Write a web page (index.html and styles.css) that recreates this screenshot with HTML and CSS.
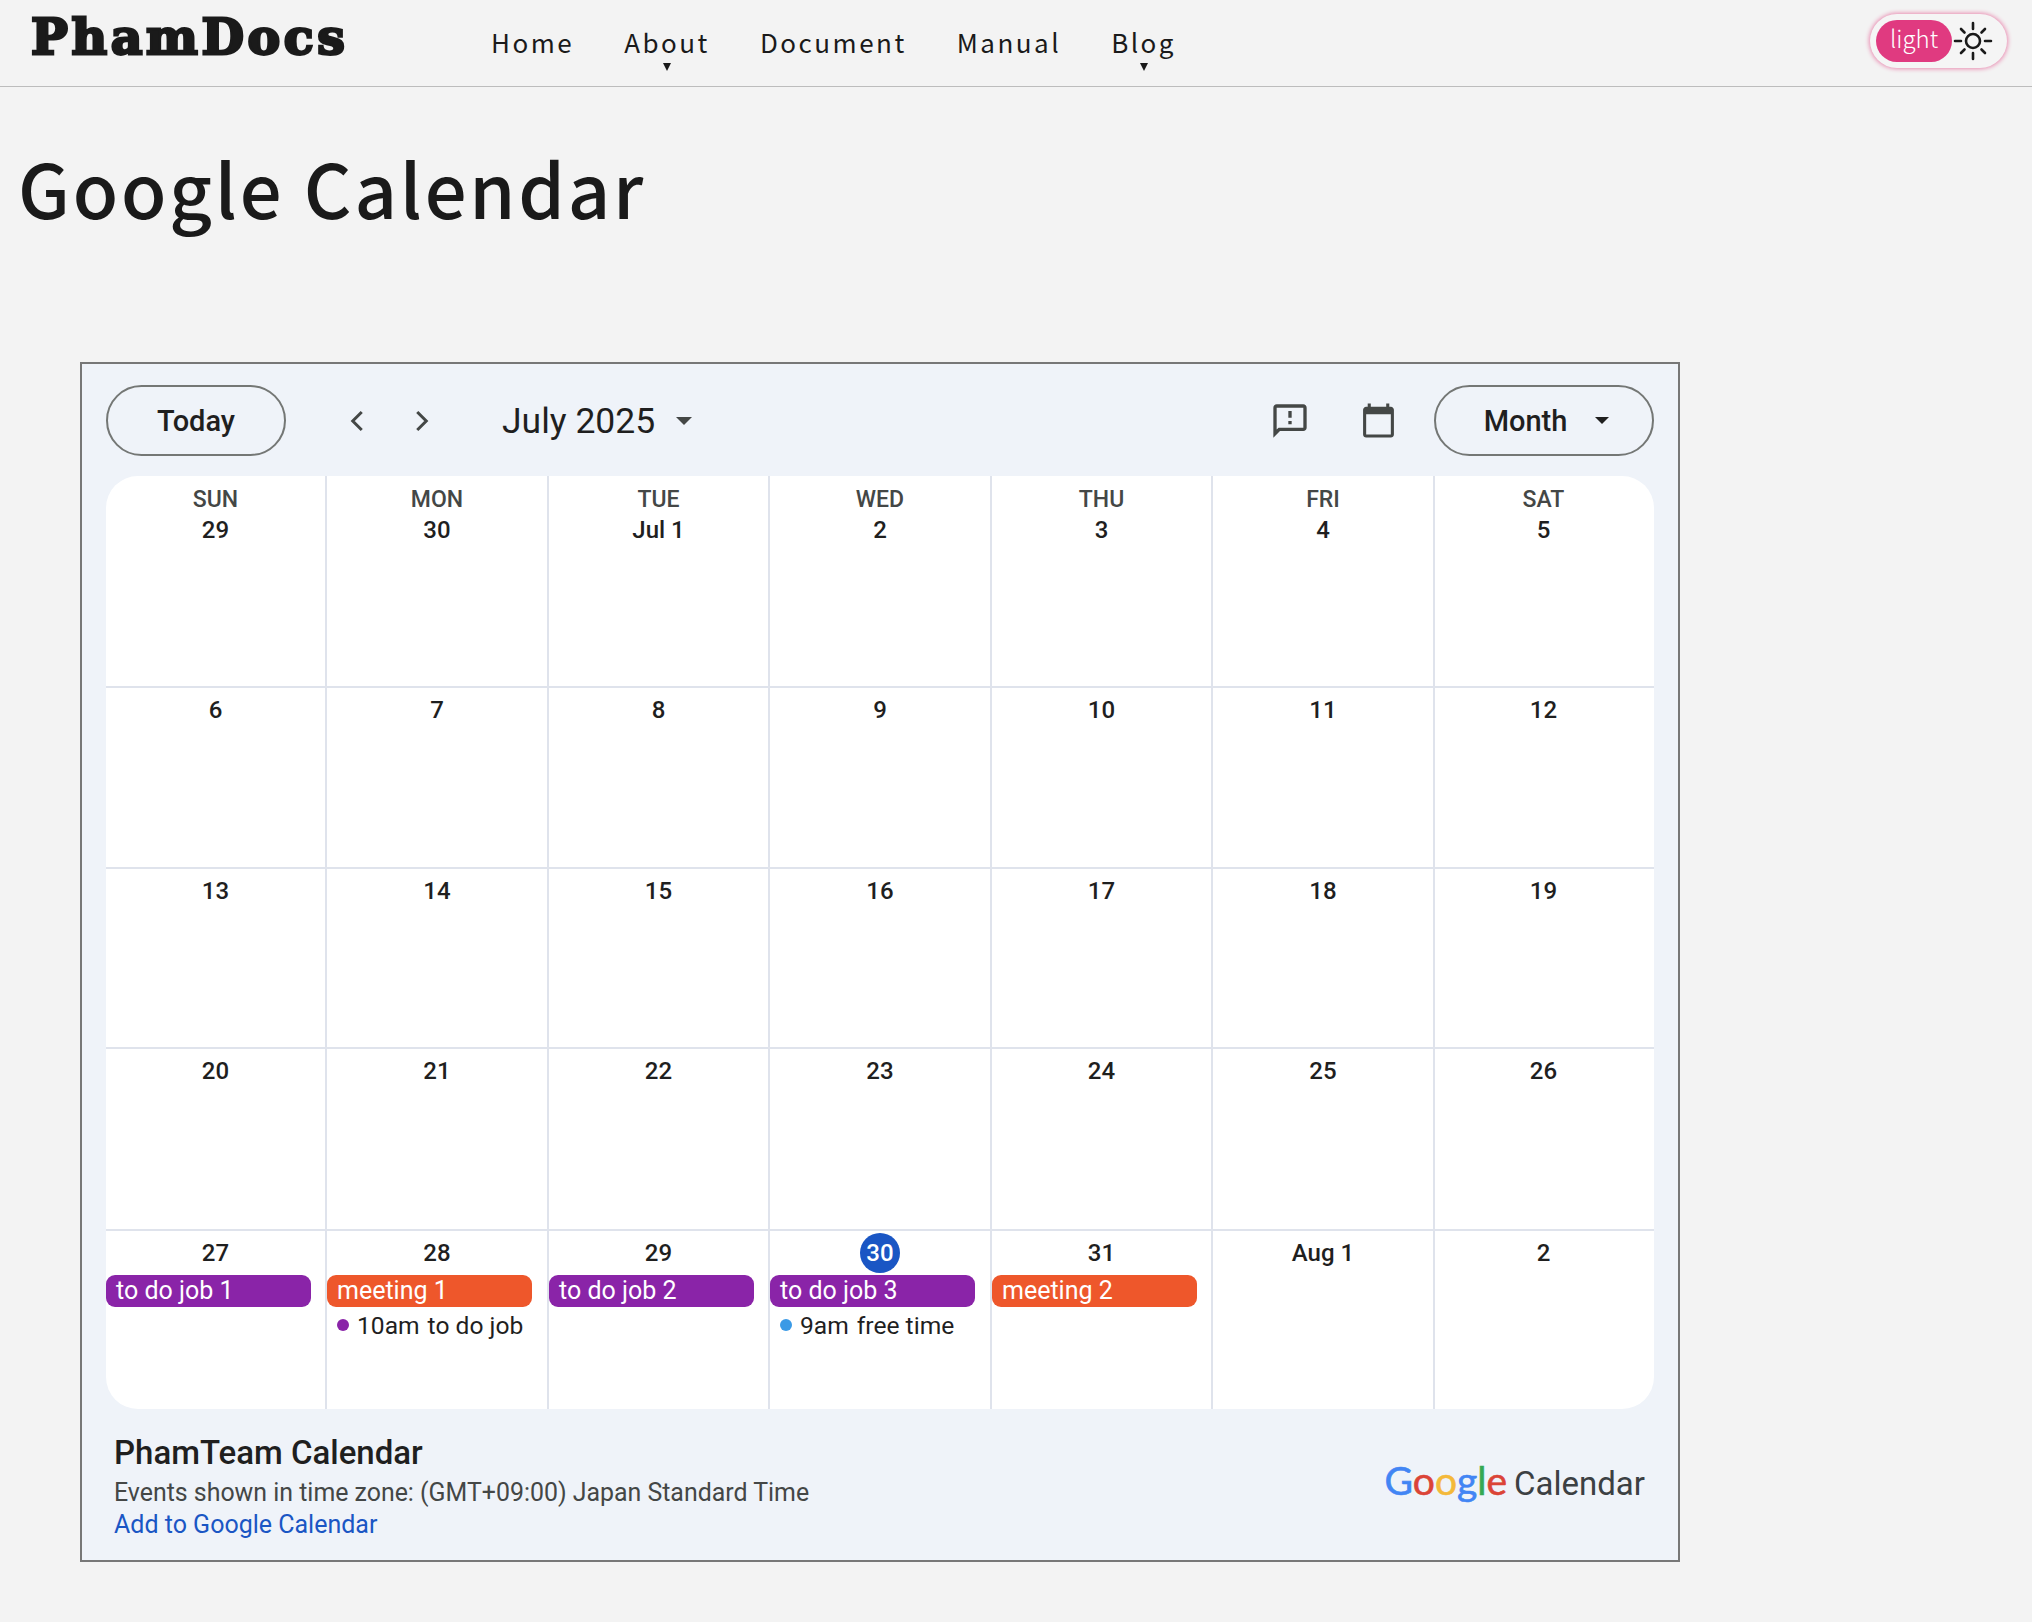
FILE: index.html
```html
<!DOCTYPE html>
<html lang="en">
<head>
<meta charset="utf-8">
<title>Google Calendar</title>
<link rel="stylesheet" href="styles.css">
</head>
<body>
<header class="topbar">
  <a class="brand">PhamDocs</a>
  <nav class="nav">
    <a class="nav-item">Home</a>
    <a class="nav-item has-menu">About</a>
    <a class="nav-item">Document</a>
    <a class="nav-item">Manual</a>
    <a class="nav-item has-menu">Blog</a>
  </nav>
  <div class="theme-toggle">
    <span class="theme-label">light</span>
    <svg class="sun" viewBox="0 0 40 40" fill="none" stroke="#1a1a1a" stroke-width="2.6" stroke-linecap="round">
      <circle cx="20" cy="20" r="7"/>
      <path d="M20 2v6M20 32v6M2 20h6M32 20h6M8 8l3.500 3.500M28.500 28.500 32 32M32 8l-3.500 3.500M11.500 28.500 8 32"/>
    </svg>
  </div>
</header>
<main class="content">
  <h1 class="page-title">Google Calendar</h1>
  <section class="cal-frame">
    <div class="toolbar">
      <button class="pill today">Today</button>
      <span class="icon-btn prev"><svg viewBox="0 0 24 24" width="36" height="36" fill="none" stroke="#444746" stroke-width="2"><path d="M14.500 6 8.500 12l6 6"/></svg></span>
      <span class="icon-btn next"><svg viewBox="0 0 24 24" width="36" height="36" fill="none" stroke="#444746" stroke-width="2"><path d="M9.500 6l6 6-6 6"/></svg></span>
      <span class="month-title">July 2025</span>
      <span class="caret title-caret"></span>
      <span class="spacer"></span>
      <span class="icon-btn"><svg viewBox="0 0 24 24" width="40" height="40" fill="#444746"><path d="M20 2H4c-1.100 0-1.990.9-1.990 2L2 22l4-4h14c1.100 0 2-.9 2-2V4c0-1.100-.9-2-2-2zm0 14H5.170L4 17.170V4h16v12zM11 12h2v2h-2zm0-6h2v4h-2z"/></svg></span>
      <span class="icon-btn cal-icon"><svg viewBox="0 0 24 24" width="37" height="37" fill="#444746"><path d="M20 3h-1V1h-2v2H7V1H5v2H4c-1.100 0-2 .9-2 2v16c0 1.100.9 2 2 2h16c1.100 0 2-.9 2-2V5c0-1.100-.9-2-2-2zm0 18H4V8h16v13z"/></svg></span>
      <button class="pill month-btn">Month<span class="caret month-caret"></span></button>
    </div>
    <div class="grid">
      <div class="cell head"><div class="dow">SUN</div><div class="num">29</div></div>
      <div class="cell head"><div class="dow">MON</div><div class="num">30</div></div>
      <div class="cell head"><div class="dow">TUE</div><div class="num">Jul 1</div></div>
      <div class="cell head"><div class="dow">WED</div><div class="num">2</div></div>
      <div class="cell head"><div class="dow">THU</div><div class="num">3</div></div>
      <div class="cell head"><div class="dow">FRI</div><div class="num">4</div></div>
      <div class="cell head"><div class="dow">SAT</div><div class="num">5</div></div>

      <div class="cell"><div class="num">6</div></div>
      <div class="cell"><div class="num">7</div></div>
      <div class="cell"><div class="num">8</div></div>
      <div class="cell"><div class="num">9</div></div>
      <div class="cell"><div class="num">10</div></div>
      <div class="cell"><div class="num">11</div></div>
      <div class="cell"><div class="num">12</div></div>

      <div class="cell"><div class="num">13</div></div>
      <div class="cell"><div class="num">14</div></div>
      <div class="cell"><div class="num">15</div></div>
      <div class="cell"><div class="num">16</div></div>
      <div class="cell"><div class="num">17</div></div>
      <div class="cell"><div class="num">18</div></div>
      <div class="cell"><div class="num">19</div></div>

      <div class="cell"><div class="num">20</div></div>
      <div class="cell"><div class="num">21</div></div>
      <div class="cell"><div class="num">22</div></div>
      <div class="cell"><div class="num">23</div></div>
      <div class="cell"><div class="num">24</div></div>
      <div class="cell"><div class="num">25</div></div>
      <div class="cell"><div class="num">26</div></div>

      <div class="cell"><div class="num">27</div><div class="event purple">to do job 1</div></div>
      <div class="cell"><div class="num">28</div><div class="event orange">meeting 1</div><div class="timed"><i class="dot dot-purple"></i><span>10am</span><span>to do job</span></div></div>
      <div class="cell"><div class="num">29</div><div class="event purple">to do job 2</div></div>
      <div class="cell"><div class="num"><span class="today-mark">30</span></div><div class="event purple">to do job 3</div><div class="timed"><i class="dot dot-blue"></i><span>9am</span><span>free time</span></div></div>
      <div class="cell"><div class="num">31</div><div class="event orange">meeting 2</div></div>
      <div class="cell"><div class="num">Aug 1</div></div>
      <div class="cell"><div class="num">2</div></div>
    </div>
    <footer class="cal-footer">
      <div class="cal-info">
        <div class="cal-name">PhamTeam Calendar</div>
        <div class="cal-tz">Events shown in time zone: (GMT+09:00) Japan Standard Time</div>
        <a class="cal-add">Add to Google Calendar</a>
      </div>
      <div class="g-logo"><span class="g-word"><span class="g-blue">G</span><span class="g-red">o</span><span class="g-yellow">o</span><span class="g-blue">g</span><span class="g-green">l</span><span class="g-red">e</span></span><span class="g-cal">Calendar</span></div>
    </footer>
  </section>
</main>
</body>
</html>
```

FILE: styles.css
```css
* { box-sizing: border-box; }
html, body { margin: 0; padding: 0; }
body {
  width: 2032px;
  min-height: 1622px;
  background: #f3f3f3;
  color: #1a1a1a;
  font-family: "Noto Sans CJK JP", "Noto Sans", sans-serif;
}

/* top bar */
.topbar {
  height: 87px;
  display: flex;
  align-items: flex-start;
  border-bottom: 1px solid #bcbcbc;
}
.brand {
  width: 491px;
  padding-left: 31px;
  font-family: "DejaVu Serif", serif;
  font-weight: 700;
  font-size: 49px;
  line-height: 74px;
  letter-spacing: 3.6px;
  -webkit-text-stroke: 2.8px #1a1a1a;
  white-space: nowrap;
}
.nav {
  display: flex;
  gap: 50px;
  padding-top: 23px;
  font-size: 26px;
  line-height: 38px;
  letter-spacing: 2.5px;
}
.nav-item { position: relative; }
.has-menu::after {
  content: "";
  position: absolute;
  left: 50%;
  top: 40px;
  margin-left: -4px;
  border-left: 4px solid transparent;
  border-right: 4px solid transparent;
  border-top: 8px solid #1a1a1a;
}
.theme-toggle {
  margin-left: auto;
  margin-right: 25px;
  margin-top: 14px;
  width: 137px;
  height: 54px;
  padding: 6px;
  display: flex;
  align-items: center;
  gap: 1px;
  border-radius: 27px;
  background: #f5f5f5;
  box-shadow: 0 0 4px 1px #e98ab0;
}
.theme-label {
  width: 76px;
  height: 42px;
  border-radius: 21px;
  background: #e03a80;
  color: #fff;
  font-size: 24px;
  line-height: 36px;
  text-align: center;
  font-weight: 300;
}
.sun { width: 40px; height: 40px; flex: none; }

/* heading */
.content { padding: 0 0 60px 0; }
.page-title {
  margin: 0;
  height: 275px;
  padding: 47px 0 0 18px;
  font-weight: 500;
  font-size: 74px;
  line-height: 106px;
  letter-spacing: 2.8px;
}

/* calendar frame */
.cal-frame {
  width: 1600px;
  height: 1200px;
  margin-left: 80px;
  border: 2px solid #777;
  background: #eff3f9;
  display: flex;
  flex-direction: column;
  padding: 21px 24px 0;
  font-family: Roboto, "Liberation Sans", sans-serif;
  color: #1f1f1f;
}
.toolbar {
  display: flex;
  align-items: center;
  height: 71px;
  flex: none;
}
.pill {
  height: 71px;
  border: 2px solid #747775;
  border-radius: 36px;
  background: transparent;
  color: #1f1f1f;
  font: 500 29px Roboto, sans-serif;
  padding: 0;
}
.today { width: 180px; }
.icon-btn {
  width: 48px;
  height: 48px;
  display: flex;
  align-items: center;
  justify-content: center;
  flex: none;
}
.prev { margin-left: 48px; }
.next { margin-left: 15px; }
.month-title {
  margin-left: 57px;
  font-size: 35.5px;
  font-weight: 400;
  white-space: nowrap;
}
.caret {
  display: inline-block;
  width: 0;
  height: 0;
  border-left: 8px solid transparent;
  border-right: 8px solid transparent;
  border-top: 8px solid #444746;
}
.title-caret { margin-left: 21px; }
.spacer { flex: 1; }
.cal-icon { margin-left: 40px; }
.month-btn {
  width: 220px;
  margin-left: 32px;
  padding-left: 5px;
  display: flex;
  align-items: center;
  justify-content: center;
  gap: 28px;
}
.month-caret { border-top-color: #1f1f1f; border-left-width: 7px; border-right-width: 7px; border-top-width: 7px; }

/* month grid */
.grid {
  margin-top: 20px;
  height: 933px;
  flex: none;
  display: grid;
  grid-template-columns: 221px 222px 221px 222px 221px 222px 219px;
  grid-template-rows: 212px 181px 180px 182px 178px;
  background: #fff;
  border-radius: 32px;
  overflow: hidden;
}
.cell {
  border-right: 2px solid #dfe3ec;
  border-bottom: 2px solid #dfe3ec;
  min-width: 0;
  padding-top: 9px;
}
.head { padding-top: 11px; }
.cell:nth-child(7n) { border-right: 0; padding-right: 2px; }
.cell:nth-child(n+29) { border-bottom: 0; }
.dow {
  text-align: center;
  font-size: 23px;
  font-weight: 500;
  line-height: 26px;
  color: #444746;
}
.dow + .num { margin-top: 4px; }
.num {
  text-align: center;
  font-size: 24px;
  font-weight: 500;
  line-height: 26px;
  color: #1f1f1f;
  height: 26px;
}
.today-mark {
  display: inline-block;
  width: 40px;
  height: 40px;
  margin-top: -7px;
  border-radius: 50%;
  background: #1a56c4;
  color: #fff;
  line-height: 40px;
}
.event {
  margin-top: 9px;
  width: 205px;
  height: 32px;
  padding-left: 10px;
  border-radius: 9px;
  color: #fff;
  font-size: 25px;
  line-height: 31px;
  white-space: nowrap;
}
.purple { background: #8a24a8; }
.orange { background: #ee572b; }
.timed {
  display: flex;
  align-items: center;
  margin-top: 1px;
  padding-left: 10px;
  height: 34px;
  font-size: 24.6px;
  white-space: nowrap;
  gap: 8px;
}
.dot { width: 12px; height: 12px; border-radius: 50%; flex: none; }
.dot-purple { background: #8a24a8; }
.dot-blue { background: #3a9ae6; }

/* footer */
.cal-footer {
  flex: 1;
  display: flex;
  justify-content: space-between;
  align-items: flex-start;
  padding: 23px 9px 0 8px;
}
.cal-name { font-size: 33px; font-weight: 500; line-height: 42px; }
.cal-tz { font-size: 24.9px; line-height: 32px; color: #444746; margin-top: 3px; }
.cal-add { display: block; font-size: 25px; line-height: 32px; color: #1a56c4; }
.g-logo {
  display: flex;
  align-items: baseline;
  gap: 7px;
  margin-top: 25px;
  font-family: Roboto, sans-serif;
}
.g-word { font-size: 39px; font-family: Lato, sans-serif; font-weight: 400; -webkit-text-stroke: 0.6px; }
.g-cal { font-size: 33px; color: #3c4043; }
.g-blue { color: #4285f4; }
.g-red { color: #db4437; }
.g-yellow { color: #f4b93a; }
.g-green { color: #34a853; }
```
